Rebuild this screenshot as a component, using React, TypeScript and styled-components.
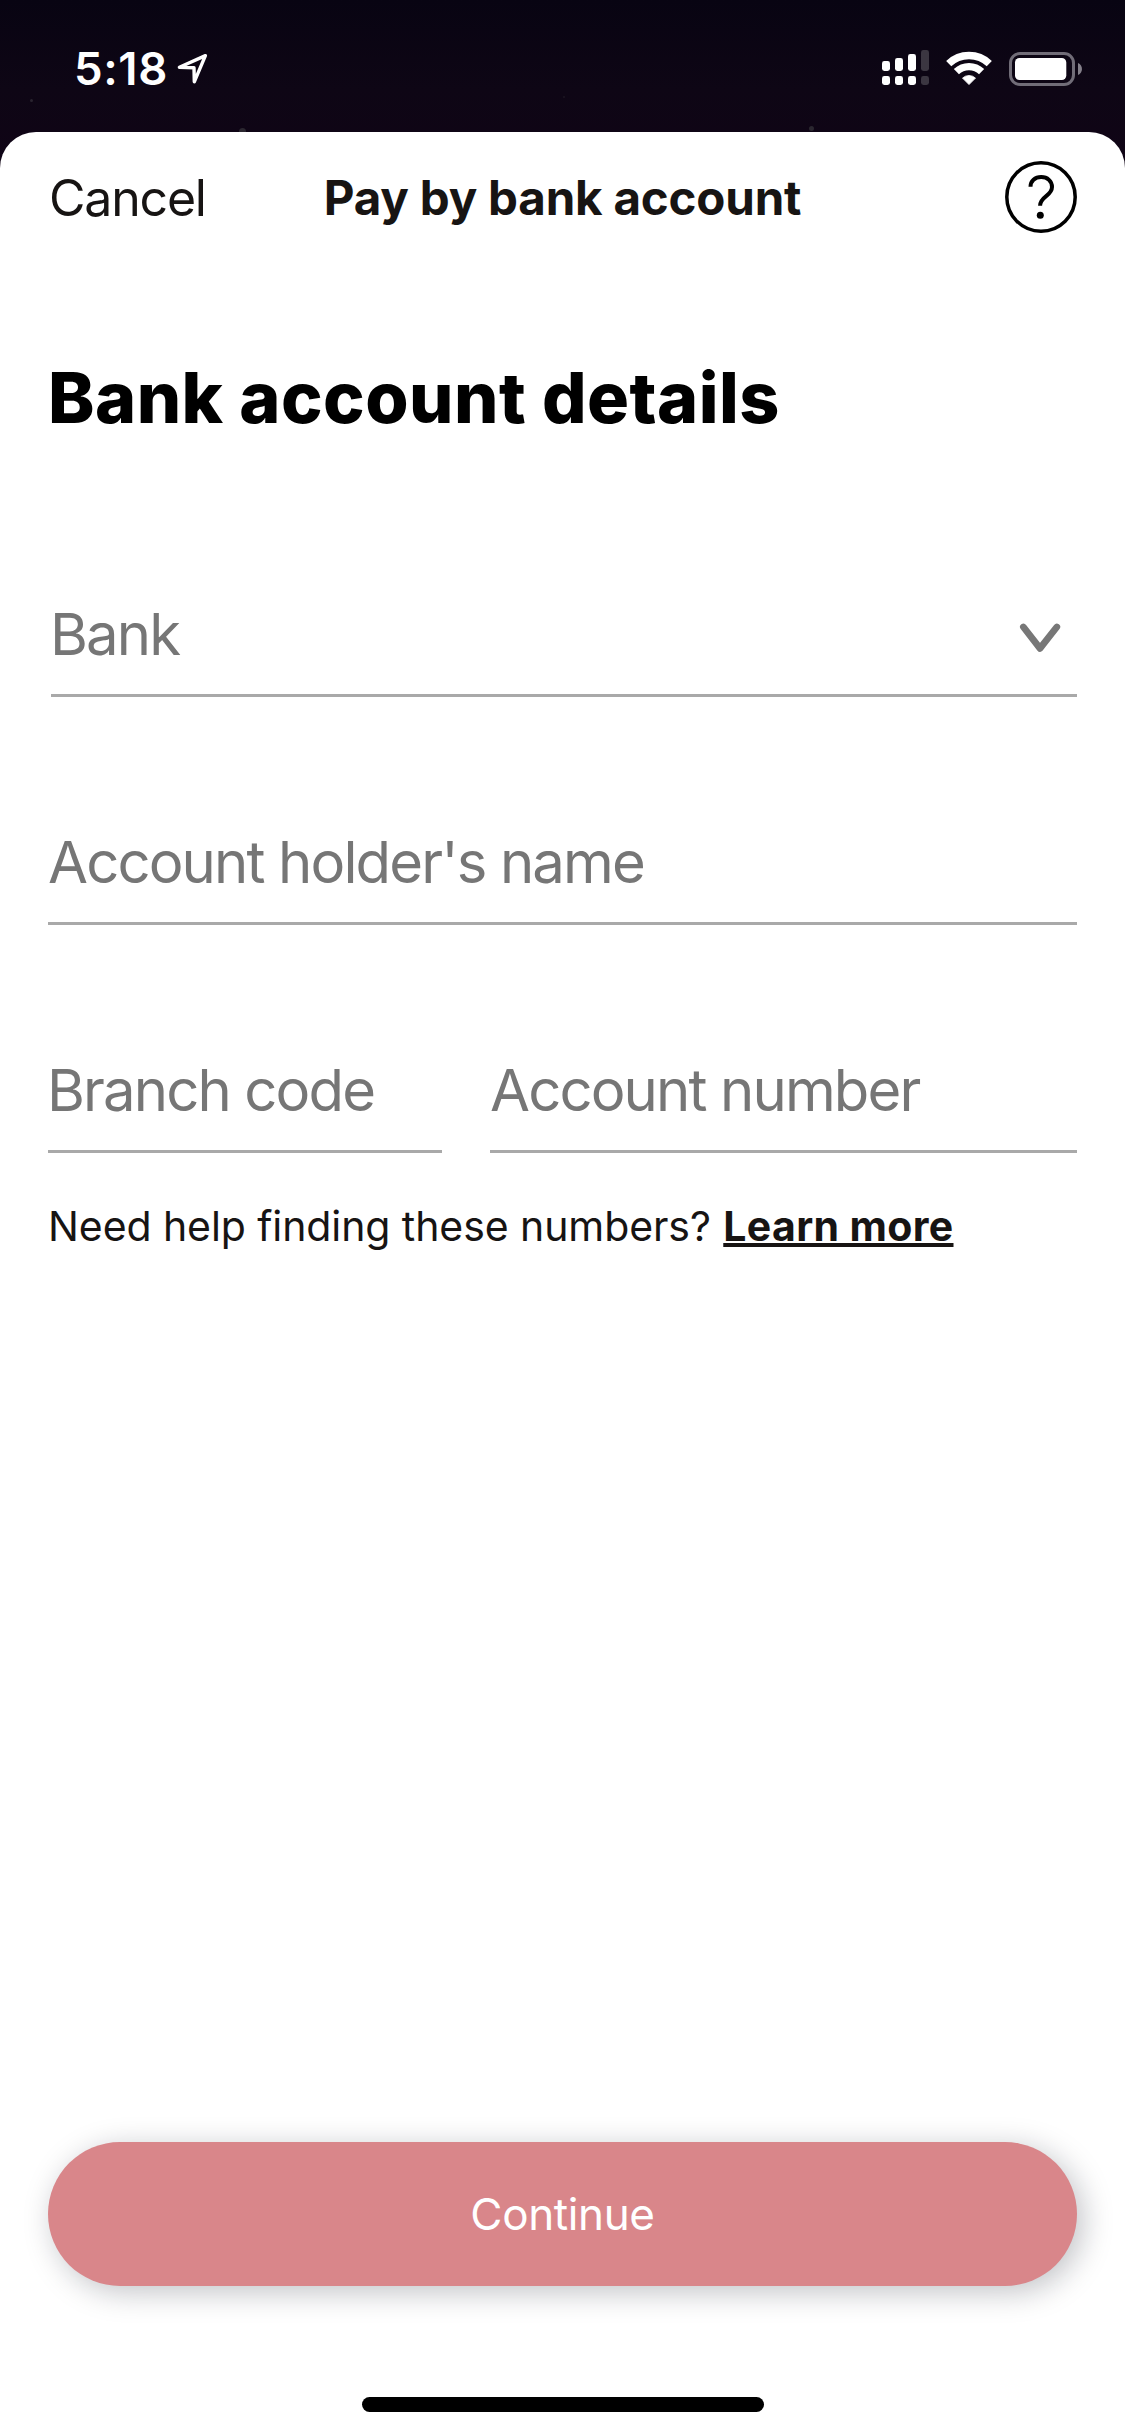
import React from "react";
import styled, { createGlobalStyle } from "styled-components";

const GlobalStyle = createGlobalStyle`
  *, *::before, *::after { box-sizing: border-box; }
  body {
    margin: 0;
    background: #ffffff;
    font-family: Inter, "Liberation Sans", sans-serif;
  }
`;

const Screen = styled.div`
  display: flex;
  flex-direction: column;
  width: 1125px;
  height: 2436px;
  overflow: hidden;
  background: linear-gradient(#080412 0, #0e0615 90px, #100416 170px);
`;

const StatusBar = styled.div`
  position: relative;
  flex: none;
  display: flex;
  align-items: flex-start;
  justify-content: space-between;
  height: 132px;
  padding: 50px 43px 0 74px;
  overflow: hidden;
`;

const Star = styled.i<{ $x: number; $y: number; $size: number; $tone: string }>`
  position: absolute;
  left: ${(p) => p.$x}px;
  top: ${(p) => p.$y}px;
  width: ${(p) => p.$size}px;
  height: ${(p) => p.$size}px;
  border-radius: 50%;
  background: ${(p) => p.$tone};
`;

const ClockGroup = styled.div`
  display: flex;
  align-items: flex-start;
  gap: 7px;
`;

const Clock = styled.span`
  color: #ffffff;
  font-size: 45.5px;
  font-weight: 600;
  line-height: 38px;
  letter-spacing: 0.6px;
`;

const Indicators = styled.div`
  display: flex;
  align-items: flex-start;
`;

const WifiSlot = styled.div`
  display: flex;
  margin: 0 16px;
`;

const Icon = styled.svg`
  display: block;
  flex: none;
`;

const Sheet = styled.main`
  flex: 1;
  display: flex;
  flex-direction: column;
  padding: 0 48px 24px;
  border-radius: 36px 36px 0 0;
  background: #ffffff;
`;

const Header = styled.header`
  display: grid;
  grid-template-columns: 1fr auto 1fr;
  align-items: center;
  height: 132px;
`;

const TextButton = styled.button`
  justify-self: start;
  padding: 0 0 1px 1px;
  border: 0;
  background: none;
  color: #171413;
  font: 400 50px/60px Inter, "Liberation Sans", sans-serif;
  letter-spacing: -1.2px;
`;

const Title = styled.h1`
  margin: 0;
  color: #171413;
  font-size: 47.5px;
  font-weight: 700;
  line-height: 60px;
  letter-spacing: -0.2px;
`;

const IconButton = styled.button`
  justify-self: end;
  margin-bottom: 2px;
  padding: 0;
  border: 0;
  background: none;
`;

const Heading = styled.h2`
  margin: 92px 0 134px;
  color: #000000;
  font-size: 70px;
  font-weight: 800;
  line-height: 84px;
  letter-spacing: 0.47px;
`;

const Form = styled.form`
  display: flex;
  flex-direction: column;
  gap: 105px;
`;

const FieldRow = styled.div`
  display: grid;
  grid-template-columns: 394px 1fr;
  gap: 48px;
`;

const Field = styled.label<{ $inset?: number }>`
  display: flex;
  align-items: center;
  justify-content: space-between;
  height: 123px;
  margin-left: ${(p) => p.$inset ?? 0}px;
  border-bottom: 3px solid #a9a9a9;
`;

const Placeholder = styled.span<{ $indent?: number }>`
  color: #767676;
  font-size: 58px;
  line-height: 72px;
  letter-spacing: -1.86px;
  text-indent: ${(p) => p.$indent ?? 0}px;
  white-space: nowrap;
`;

const ChevronSlot = styled.div`
  display: flex;
  margin: 7px 16px 0 0;
`;

const HelpText = styled.p`
  margin: 48px 0 0;
  color: #171413;
  font-size: 41px;
  line-height: 51px;
  letter-spacing: -0.08px;
  white-space: nowrap;
`;

const HelpLink = styled.a`
  margin-left: 1px;
  font-weight: 700;
  letter-spacing: 0.35px;
  text-decoration: underline;
  text-decoration-thickness: 4px;
  text-decoration-skip-ink: none;
  text-underline-offset: 2px;
`;

const PrimaryButton = styled.button`
  flex: none;
  height: 144px;
  margin-top: auto;
  padding: 0;
  border: 0;
  border-radius: 72px;
  background: #d9868a;
  box-shadow: 6px 6px 30px rgba(10, 14, 30, 0.25);
  color: #ffffff;
  font: 400 44px/60px Inter, "Liberation Sans", sans-serif;
  letter-spacing: -0.37px;
`;

const HomeIndicator = styled.div`
  flex: none;
  align-self: center;
  width: 402px;
  height: 15px;
  margin-top: 111px;
  border-radius: 8px;
  background: #000000;
`;

const LocationIcon = () => (
  <Icon width="34" height="36" viewBox="0 0 34 36" fill="none">
    <path
      d="M30.4 5.6 4.4 17.2 19 17.7 19.3 31.8Z"
      stroke="#fff"
      strokeWidth="3.4"
      strokeLinejoin="round"
    />
  </Icon>
);

const signalBars = [
  { top: 11, on: true },
  { top: 8, on: true },
  { top: 4, on: true },
  { top: 0, on: false },
];

const SignalIcon = () => (
  <Icon width="47" height="35" viewBox="0 0 47 35">
    {signalBars.map(({ top, on }, i) => (
      <g key={i} fill={on ? "#fff" : "#3b3641"}>
        <rect x={i * 13} y={top} width="8" height={21 - top} rx="2.4" />
        <rect x={i * 13} y="26" width="8" height="9" rx="2.4" />
      </g>
    ))}
  </Icon>
);

const WifiIcon = () => (
  <Icon width="48" height="36" viewBox="0 0 48 36">
    <g fill="none" stroke="#fff" strokeWidth="7.4">
      <path d="M3.7 13.6A29.4 29.4 0 0 1 44.3 13.6" />
      <path d="M11.4 21.7A18.2 18.2 0 0 1 36.6 21.7" />
    </g>
    <path
      d="M24 34.6 17.5 28.1A9.4 9.4 0 0 1 30.5 28.1Z"
      fill="#fff"
      stroke="#fff"
      strokeWidth="0.8"
      strokeLinejoin="round"
    />
  </Icon>
);

const BatteryIcon = () => (
  <Icon width="73" height="38" viewBox="0 0 73 38">
    <rect x="1.5" y="3.5" width="63" height="31" rx="9.5" fill="none" stroke="#716d78" strokeWidth="3" />
    <rect x="6" y="8" width="51.3" height="22" rx="4.5" fill="#fff" />
    <path d="M69 13C74.3 15 74.3 23 69 25Z" fill="#84808a" />
  </Icon>
);

const HelpIcon = () => (
  <Icon width="72" height="72" viewBox="0 0 72 72" fill="none" stroke="#000">
    <circle cx="36" cy="36" r="34.2" strokeWidth="3.5" />
    <path
      d="M25.5 25.7C25.5 19.9 29.9 16.1 36.2 16.1 42.5 16.1 47 20.2 47 26 47 35.3 35.1 35 35.1 44.8"
      strokeWidth="4"
    />
    <circle cx="35.3" cy="54.3" r="3.5" fill="#000" stroke="none" />
  </Icon>
);

const ChevronIcon = () => (
  <Icon width="42" height="32" viewBox="0 0 42 32" fill="none">
    <path
      d="M4.4 5 21 26.4 37.8 5"
      stroke="#777"
      strokeWidth="6.8"
      strokeLinecap="round"
      strokeLinejoin="round"
    />
  </Icon>
);

export default function App() {
  return (
    <>
      <GlobalStyle />
      <Screen>
        <StatusBar>
          <Star $x={30} $y={99} $size={3} $tone="#2a2430" />
          <Star $x={239} $y={128} $size={7} $tone="#2b2730" />
          <Star $x={563} $y={96} $size={2} $tone="#1c1622" />
          <Star $x={809} $y={126} $size={5} $tone="#2b2730" />
          <ClockGroup>
            <Clock>5:18</Clock>
            <LocationIcon />
          </ClockGroup>
          <Indicators>
            <SignalIcon />
            <WifiSlot>
              <WifiIcon />
            </WifiSlot>
            <BatteryIcon />
          </Indicators>
        </StatusBar>
        <Sheet>
          <Header>
            <TextButton type="button">Cancel</TextButton>
            <Title>Pay by bank account</Title>
            <IconButton type="button" aria-label="Help">
              <HelpIcon />
            </IconButton>
          </Header>
          <Heading>Bank account details</Heading>
          <Form>
            <Field $inset={3}>
              <Placeholder $indent={-1}>Bank</Placeholder>
              <ChevronSlot>
                <ChevronIcon />
              </ChevronSlot>
            </Field>
            <Field>
              <Placeholder>Account holder's name</Placeholder>
            </Field>
            <FieldRow>
              <Field>
                <Placeholder $indent={-1}>Branch code</Placeholder>
              </Field>
              <Field>
                <Placeholder>Account number</Placeholder>
              </Field>
            </FieldRow>
          </Form>
          <HelpText>
            Need help finding these numbers? <HelpLink>Learn more</HelpLink>
          </HelpText>
          <PrimaryButton type="button">Continue</PrimaryButton>
          <HomeIndicator />
        </Sheet>
      </Screen>
    </>
  );
}
